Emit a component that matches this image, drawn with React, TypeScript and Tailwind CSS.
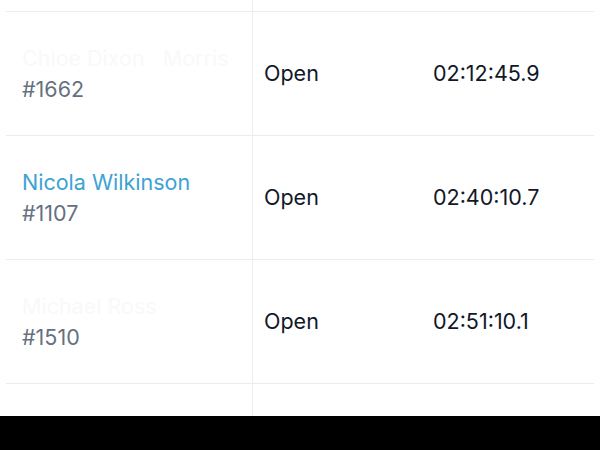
const rows = [
  { name: 'Chloe Dixon   Morris', id: '#1662', status: 'Open', time: '02:12:45.9', faded: true },
  { name: 'Nicola Wilkinson', id: '#1107', status: 'Open', time: '02:40:10.7', faded: false },
  { name: 'Michael Ross', id: '#1510', status: 'Open', time: '02:51:10.1', faded: true },
]

export default function App() {
  return (
    <div className="w-[600px] h-[450px] bg-white flex flex-col font-['Inter',sans-serif] text-[21.5px] overflow-hidden">
      <div className="flex-1 flex flex-col px-[6px] overflow-hidden">
        {/* top spacer continuing the column divider */}
        <div className="grid grid-cols-[246px_1fr] h-[11px] shrink-0">
          <div />
          <div className="border-l border-[#ededf0]" />
        </div>

        {rows.map((r) => (
          <div key={r.id} className="grid grid-cols-[246px_1fr] h-[124px] shrink-0 border-t border-[#ececef]">
            <div className="flex flex-col justify-center pl-4">
              <span className={`leading-[31px] whitespace-pre ${r.faded ? 'text-[#f8f9fb]' : 'text-[#3ea2d3]'}`}>
                {r.name}
              </span>
              <span className="leading-[31px] text-[#667080]">{r.id}</span>
            </div>
            <div className="border-l border-[#ededf0] flex items-center pl-[11px] text-[#111827]">
              <span className="w-[169px]">{r.status}</span>
              <span>{r.time}</span>
            </div>
          </div>
        ))}

        <div className="grid grid-cols-[246px_1fr] flex-1 border-t border-[#ececef]">
          <div />
          <div className="border-l border-[#ededf0]" />
        </div>
      </div>
      <div className="h-[34px] bg-black shrink-0" />
    </div>
  )
}
